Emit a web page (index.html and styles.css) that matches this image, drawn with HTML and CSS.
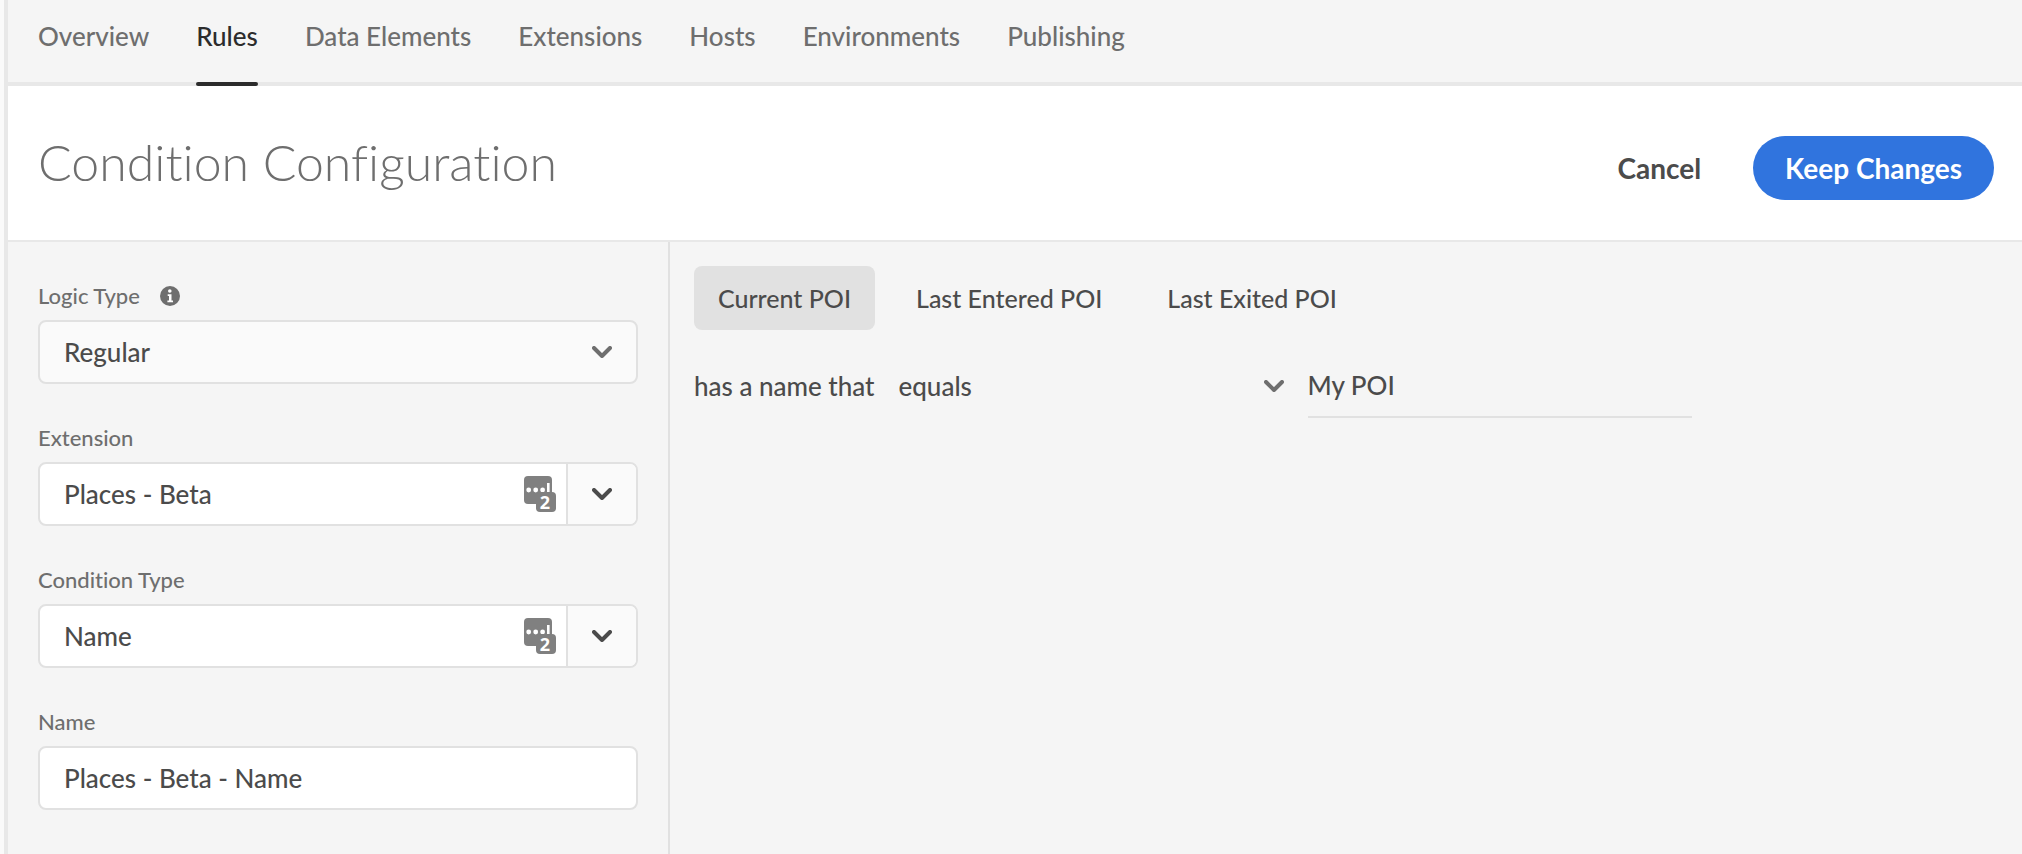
FILE: index.html
```html
<!DOCTYPE html>
<html lang="en">
<head>
<meta charset="utf-8">
<meta name="viewport" content="width=device-width, initial-scale=1">
<title>Condition Configuration</title>
<link rel="stylesheet" href="styles.css">
</head>
<body>
<svg class="defs" aria-hidden="true">
  <symbol id="chevron" viewBox="0 0 20 12"><path d="M2 2l8 8 8-8" fill="none" stroke="currentColor" stroke-width="4" stroke-linecap="round" stroke-linejoin="round"/></symbol>
</svg>
<div class="app">
  <nav class="nav">
    <a class="nav-link" href="#">Overview</a>
    <a class="nav-link is-active" href="#" aria-current="page">Rules</a>
    <a class="nav-link" href="#">Data Elements</a>
    <a class="nav-link" href="#">Extensions</a>
    <a class="nav-link" href="#">Hosts</a>
    <a class="nav-link" href="#">Environments</a>
    <a class="nav-link" href="#">Publishing</a>
  </nav>
  <header class="header">
    <h1 class="title">Condition Configuration</h1>
    <div class="actions">
      <button class="btn" type="button">Cancel</button>
      <button class="btn btn-primary" type="button">Keep Changes</button>
    </div>
  </header>
  <main class="main">
    <form class="side">
      <div class="field">
        <div class="label-row">
          <label class="label" for="logic">Logic Type</label>
          <svg class="info" viewBox="0 0 20 20" role="img" aria-label="Info"><circle cx="10" cy="10" r="10" fill="#6e6e6e"/><circle cx="9.8" cy="5" r="1.8" fill="#fff"/><path d="M7.7 8.2h3.8v6.2H13v1.8H7.4v-1.8H9V10H7.7z" fill="#fff"/></svg>
        </div>
        <div class="control">
          <select class="select" id="logic"><option>Regular</option></select>
          <svg class="chevron"><use href="#chevron"/></svg>
        </div>
      </div>
      <div class="field">
        <div class="label-row"><label class="label" for="extension">Extension</label></div>
        <div class="control combo">
          <input class="input" id="extension" type="text" value="Places - Beta">
          <svg class="vault" viewBox="0 0 32 36">
            <rect width="28" height="28" rx="4" fill="#808080"/>
            <circle cx="4.7" cy="14" r="2.4" fill="#fff"/><circle cx="11.7" cy="14" r="2.4" fill="#fff"/><circle cx="18.6" cy="14" r="2.4" fill="#fff"/>
            <rect x="23" y="7" width="2.6" height="10" fill="#fff"/>
            <rect x="12" y="16" width="20" height="20" rx="4" fill="#808080"/>
            <text class="vault-count" x="21" y="33" text-anchor="middle">2</text>
          </svg>
          <button class="combo-toggle" type="button" aria-label="Show extensions"><svg class="combo-chevron"><use href="#chevron"/></svg></button>
        </div>
      </div>
      <div class="field">
        <div class="label-row"><label class="label" for="condition">Condition Type</label></div>
        <div class="control combo">
          <input class="input" id="condition" type="text" value="Name">
          <svg class="vault" viewBox="0 0 32 36">
            <rect width="28" height="28" rx="4" fill="#808080"/>
            <circle cx="4.7" cy="14" r="2.4" fill="#fff"/><circle cx="11.7" cy="14" r="2.4" fill="#fff"/><circle cx="18.6" cy="14" r="2.4" fill="#fff"/>
            <rect x="23" y="7" width="2.6" height="10" fill="#fff"/>
            <rect x="12" y="16" width="20" height="20" rx="4" fill="#808080"/>
            <text class="vault-count" x="21" y="33" text-anchor="middle">2</text>
          </svg>
          <button class="combo-toggle" type="button" aria-label="Show condition types"><svg class="combo-chevron"><use href="#chevron"/></svg></button>
        </div>
      </div>
      <div class="field">
        <div class="label-row"><label class="label" for="name">Name</label></div>
        <div class="control combo"><input class="input" id="name" type="text" value="Places - Beta - Name"></div>
      </div>
    </form>
    <section class="content">
      <div class="tabs" role="tablist">
        <button class="tab is-selected" type="button" role="tab" aria-selected="true">Current POI</button>
        <button class="tab" type="button" role="tab" aria-selected="false">Last Entered POI</button>
        <button class="tab" type="button" role="tab" aria-selected="false">Last Exited POI</button>
      </div>
      <div class="rule">
        <label class="rule-label" for="operator">has a name that</label>
        <div class="operator">
          <select class="operator-select" id="operator"><option>equals</option></select>
          <svg class="operator-chevron"><use href="#chevron"/></svg>
        </div>
        <input class="value" type="text" value="My POI" aria-label="POI name">
      </div>
    </section>
  </main>
</div>
</body>
</html>
```
FILE: styles.css
```css
* { box-sizing: border-box; }
body {
  margin: 0;
  background: #fafafa;
  color: #4b4b4b;
  font-family: Lato, "Open Sans", sans-serif;
  font-size: 26px;
  font-weight: 500;
  font-variant-ligatures: none;
  line-height: 32px;
}
button, input, select { font: inherit; color: inherit; margin: 0; }
.defs { position: absolute; width: 0; height: 0; }
.vault-count { font: bold 18px "Noto Sans", sans-serif; fill: #fff; }

.app {
  display: flex;
  flex-direction: column;
  min-height: 100vh;
  margin-left: 4px;
  border-left: 4px solid #e8e8e8;
  background: #f5f5f5;
}
.nav {
  display: flex;
  gap: 47px;
  padding: 0 30px;
  border-bottom: 4px solid #e8e8e8;
}
.nav-link {
  position: relative;
  padding: 20px 0 30px;
  color: #6e6e6e;
  text-decoration: none;
}
.nav-link.is-active { color: #2c2c2c; }
.nav-link.is-active::after {
  content: "";
  position: absolute;
  left: 0;
  right: 0;
  bottom: -4px;
  height: 4px;
  border-radius: 2px;
  background: #2c2c2c;
}

.header {
  display: flex;
  align-items: flex-start;
  justify-content: space-between;
  padding: 50px 28px 40px 30px;
  border-bottom: 2px solid #e8e8e8;
  background: #fff;
}
.title {
  margin: 0;
  color: #6e6e6e;
  font-size: 50px;
  font-weight: 300;
  line-height: 52px;
}
.actions { display: flex; align-items: center; gap: 20px; }
.btn {
  height: 64px;
  padding: 0 32px;
  border: 0;
  border-radius: 32px;
  background: none;
  font-size: 28px;
  font-weight: 700;
}
.btn-primary { background: #3074de; color: #fff; }

.main { display: flex; flex: 1; }
.side {
  display: flex;
  flex-direction: column;
  gap: 38px;
  width: 662px;
  padding: 38px 30px;
  border-right: 2px solid #e1e1e1;
}
.label-row { display: flex; align-items: center; gap: 20px; height: 40px; padding-bottom: 8px; }
.label { color: #6e6e6e; font-size: 22px; }
.info { width: 20px; height: 20px; }
.control { position: relative; }
.select, .combo {
  width: 100%;
  height: 64px;
  border: 2px solid #e1e1e1;
  border-radius: 8px;
}
.select { display: block; appearance: none; padding: 0 24px; background: #fafafa; }
.chevron { position: absolute; right: 26px; top: 26px; width: 20px; height: 12px; color: #6e6e6e; }
.combo { display: flex; align-items: center; background: #fff; }
.input { flex: 1; min-width: 0; height: 100%; padding: 0 24px; border: 0; background: none; }
.vault { width: 32px; height: 36px; margin-right: 10px; overflow: visible; }
.combo-toggle {
  display: flex;
  align-items: center;
  justify-content: center;
  width: 70px;
  height: 100%;
  padding: 0;
  border: 0;
  border-left: 2px solid #e1e1e1;
  border-radius: 0 6px 6px 0;
  background: #fafafa;
}
.combo-chevron { width: 20px; height: 12px; }

.content { flex: 1; padding: 24px; }
.tabs { display: flex; gap: 17px; }
.tab { height: 64px; padding: 0 24px; border: 0; border-radius: 8px; background: none; font-size: 25px; }
.tab.is-selected { background: #e1e1e1; }
.rule { display: flex; align-items: center; gap: 24px; margin-top: 24px; }
.operator { position: relative; width: 385px; }
.operator-select { display: block; width: 100%; height: 64px; padding: 0; border: 0; background: none; appearance: none; }
.operator-chevron { position: absolute; right: 0; top: 26px; width: 20px; height: 12px; color: #6e6e6e; }
.value { width: 384px; height: 64px; padding: 0; border: 0; border-bottom: 2px solid #e1e1e1; background: none; }
```
